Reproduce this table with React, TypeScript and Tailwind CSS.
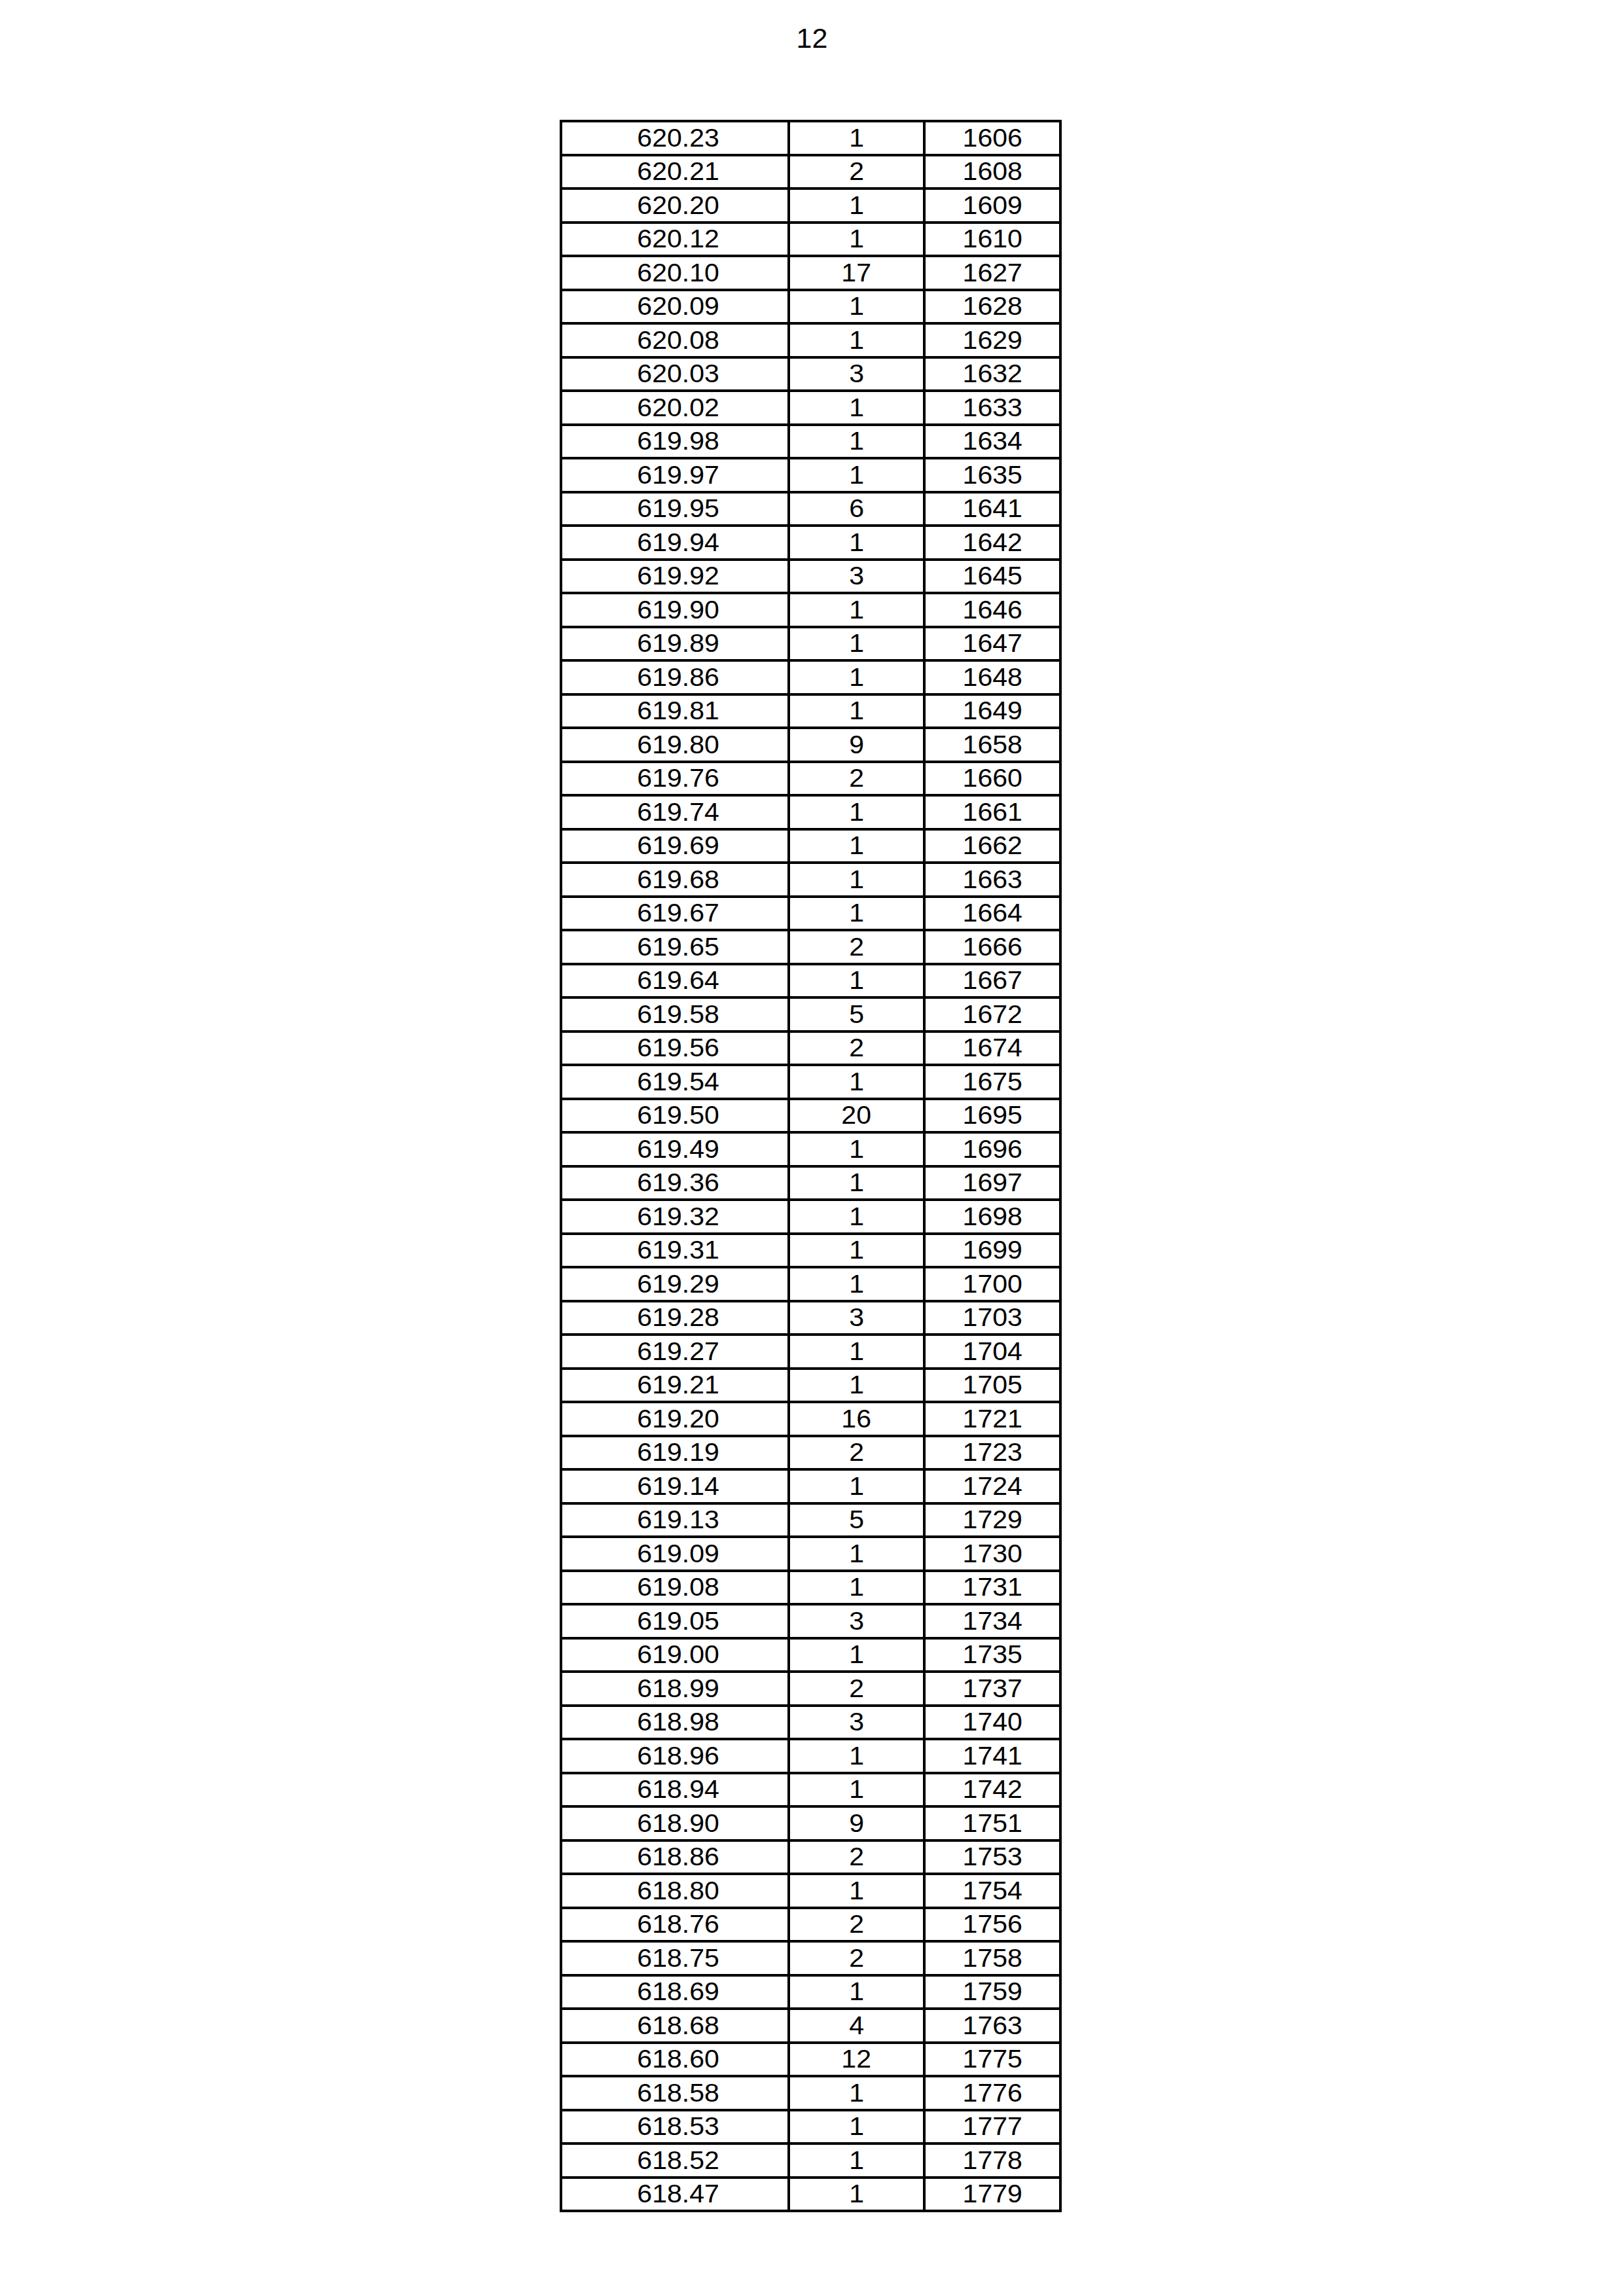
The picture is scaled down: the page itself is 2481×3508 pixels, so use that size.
const rows: [string, string, string][] = [
  ["620.23", "1", "1606"],
  ["620.21", "2", "1608"],
  ["620.20", "1", "1609"],
  ["620.12", "1", "1610"],
  ["620.10", "17", "1627"],
  ["620.09", "1", "1628"],
  ["620.08", "1", "1629"],
  ["620.03", "3", "1632"],
  ["620.02", "1", "1633"],
  ["619.98", "1", "1634"],
  ["619.97", "1", "1635"],
  ["619.95", "6", "1641"],
  ["619.94", "1", "1642"],
  ["619.92", "3", "1645"],
  ["619.90", "1", "1646"],
  ["619.89", "1", "1647"],
  ["619.86", "1", "1648"],
  ["619.81", "1", "1649"],
  ["619.80", "9", "1658"],
  ["619.76", "2", "1660"],
  ["619.74", "1", "1661"],
  ["619.69", "1", "1662"],
  ["619.68", "1", "1663"],
  ["619.67", "1", "1664"],
  ["619.65", "2", "1666"],
  ["619.64", "1", "1667"],
  ["619.58", "5", "1672"],
  ["619.56", "2", "1674"],
  ["619.54", "1", "1675"],
  ["619.50", "20", "1695"],
  ["619.49", "1", "1696"],
  ["619.36", "1", "1697"],
  ["619.32", "1", "1698"],
  ["619.31", "1", "1699"],
  ["619.29", "1", "1700"],
  ["619.28", "3", "1703"],
  ["619.27", "1", "1704"],
  ["619.21", "1", "1705"],
  ["619.20", "16", "1721"],
  ["619.19", "2", "1723"],
  ["619.14", "1", "1724"],
  ["619.13", "5", "1729"],
  ["619.09", "1", "1730"],
  ["619.08", "1", "1731"],
  ["619.05", "3", "1734"],
  ["619.00", "1", "1735"],
  ["618.99", "2", "1737"],
  ["618.98", "3", "1740"],
  ["618.96", "1", "1741"],
  ["618.94", "1", "1742"],
  ["618.90", "9", "1751"],
  ["618.86", "2", "1753"],
  ["618.80", "1", "1754"],
  ["618.76", "2", "1756"],
  ["618.75", "2", "1758"],
  ["618.69", "1", "1759"],
  ["618.68", "4", "1763"],
  ["618.60", "12", "1775"],
  ["618.58", "1", "1776"],
  ["618.53", "1", "1777"],
  ["618.52", "1", "1778"],
  ["618.47", "1", "1779"],
];

// cell text in the scan is a touch wider than plain Arial
const Cell = ({ children, className = "" }: { children: string; className?: string }) => (
  <div className={"flex items-center justify-center text-[38px] leading-none " + className}>
    <span className="inline-block scale-x-[1.08]">{children}</span>
  </div>
);

export default function App() {
  return (
    <div className="w-[2481px] h-[3508px] bg-white text-black font-['Liberation_Sans',Arial,sans-serif]">
      {/* page number */}
      <div className="pt-[34px] h-[183px] text-center text-[43px] leading-[48px]">12</div>

      <div className="ml-[855px] w-[767px] border-4 border-black">
        {rows.map(([level, count, total], i) => (
          <div
            key={level}
            className={
              "grid grid-cols-[344px_4px_203px_4px_204px] h-[47.5px] " +
              (i < rows.length - 1 ? "border-b-4 border-black box-content" : "")
            }
          >
            <Cell className="pl-[10px]">{level}</Cell>
            <div className="bg-black" />
            <Cell>{count}</Cell>
            <div className="bg-black" />
            <Cell>{total}</Cell>
          </div>
        ))}
      </div>
    </div>
  );
}
